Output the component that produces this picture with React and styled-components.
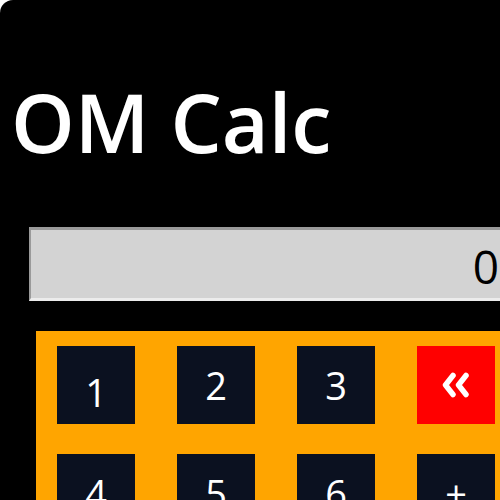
import React from 'react';
import styled, { createGlobalStyle } from 'styled-components';

const GlobalStyle = createGlobalStyle`
  html, body {
    margin: 0;
    padding: 0;
    background: #ffffff;
  }
  body {
    font-family: "Open Sans", "Noto Sans", sans-serif;
  }
`;

const StyledCalc = styled.div`
  background: #000000;
  border-top-left-radius: 13px;
  min-height: 500px;
  width: 500px;
  overflow: hidden;
  padding-top: 80px;
  box-sizing: border-box;
`;

const Title = styled.h1`
  margin: 0 0 63px;
  padding-left: 11px;
  font-size: 81px;
  line-height: 84px;
  font-weight: 600;
  color: #ffffff;
  white-space: nowrap;
`;

const Display = styled.div`
  margin-left: 29px;
  width: 480px;
  height: 74px;
  box-sizing: border-box;
  background: #d3d3d3;
  border-top: 3px solid #9a9a9a;
  border-left: 2px solid #9a9a9a;
  border-bottom: 3px solid #ececec;
  border-right: 3px solid #ececec;
  display: flex;
  align-items: center;
  justify-content: flex-end;
  padding: 4px 7px 0 0;
  font-size: 46px;
  color: #000000;
`;

const Keypad = styled.div`
  margin: 30px 0 0 36px;
  width: 520px;
  background: #ffa500;
  padding: 15px 0 0 21px;
  box-sizing: border-box;
  display: grid;
  grid-template-columns: repeat(4, 78px);
  grid-auto-rows: 78px;
  column-gap: 42px;
  row-gap: 30px;
`;

const Key = styled.button`
  border: none;
  margin: 0;
  padding: ${props => props.$drop || 0}px 0 0;
  background: ${props => (props.$danger ? '#ff0000' : '#0b1120')};
  color: #ffffff;
  font-family: "Open Sans", "Noto Sans", sans-serif;
  font-size: 38px;
  display: flex;
  align-items: center;
  justify-content: center;
`;

const BackIcon = () => (
  <svg width="30" height="26" viewBox="0 0 30 26">
    <g fill="none" stroke="#ffffff" strokeWidth="5.5" strokeLinecap="round" strokeLinejoin="round">
      <polyline points="12,3.5 4.5,13 12,22.5" />
      <polyline points="25,3.5 17.5,13 25,22.5" />
    </g>
  </svg>
);

const App = () => {
  return (
    <>
      <GlobalStyle />
      <StyledCalc>
        <Title>OM Calc</Title>
        <Display>0</Display>
        <Keypad>
          <Key $drop={14}>1</Key>
          <Key>2</Key>
          <Key>3</Key>
          <Key $danger>
            <BackIcon />
          </Key>
          <Key>4</Key>
          <Key>5</Key>
          <Key>6</Key>
          <Key>+</Key>
        </Keypad>
      </StyledCalc>
    </>
  );
};

export default App;
